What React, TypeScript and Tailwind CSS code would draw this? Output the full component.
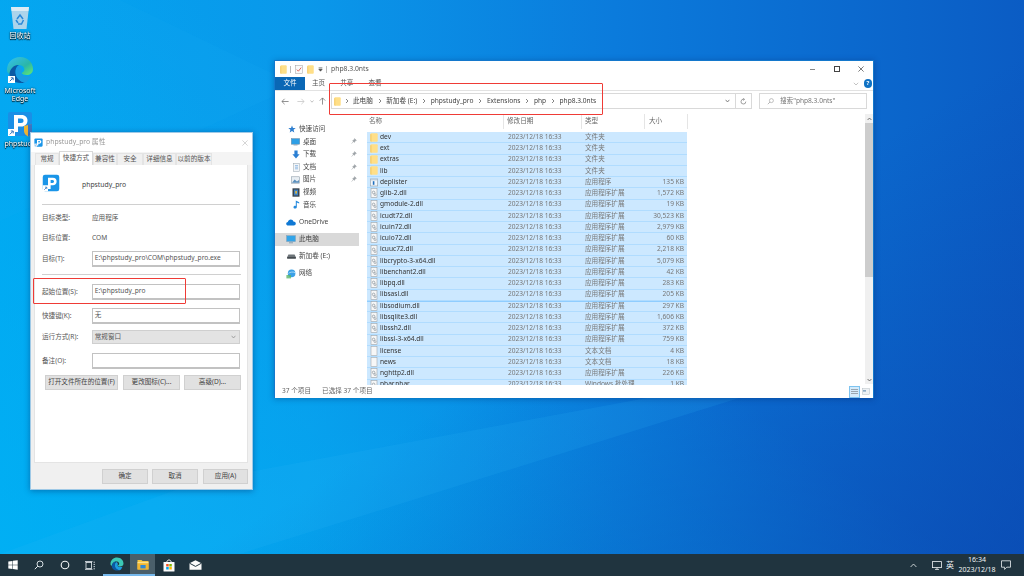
import React from "react";

const FONT = "[font-family:'Noto_Sans','Noto_Sans_CJK_SC',sans-serif]";

type Row = { n: string; t: string; s: string; k: "folder" | "dll" | "exe" | "txt" | "phar" };
const dll = "应用程序扩展";
const rows: Row[] = [
  { n: "dev", t: "文件夹", s: "", k: "folder" },
  { n: "ext", t: "文件夹", s: "", k: "folder" },
  { n: "extras", t: "文件夹", s: "", k: "folder" },
  { n: "lib", t: "文件夹", s: "", k: "folder" },
  { n: "deplister", t: "应用程序", s: "135 KB", k: "exe" },
  { n: "glib-2.dll", t: dll, s: "1,572 KB", k: "dll" },
  { n: "gmodule-2.dll", t: dll, s: "19 KB", k: "dll" },
  { n: "icudt72.dll", t: dll, s: "30,523 KB", k: "dll" },
  { n: "icuin72.dll", t: dll, s: "2,979 KB", k: "dll" },
  { n: "icuio72.dll", t: dll, s: "60 KB", k: "dll" },
  { n: "icuuc72.dll", t: dll, s: "2,218 KB", k: "dll" },
  { n: "libcrypto-3-x64.dll", t: dll, s: "5,079 KB", k: "dll" },
  { n: "libenchant2.dll", t: dll, s: "42 KB", k: "dll" },
  { n: "libpq.dll", t: dll, s: "283 KB", k: "dll" },
  { n: "libsasl.dll", t: dll, s: "205 KB", k: "dll" },
  { n: "libsodium.dll", t: dll, s: "297 KB", k: "dll" },
  { n: "libsqlite3.dll", t: dll, s: "1,606 KB", k: "dll" },
  { n: "libssh2.dll", t: dll, s: "372 KB", k: "dll" },
  { n: "libssl-3-x64.dll", t: dll, s: "759 KB", k: "dll" },
  { n: "license", t: "文本文档", s: "4 KB", k: "txt" },
  { n: "news", t: "文本文档", s: "18 KB", k: "txt" },
  { n: "nghttp2.dll", t: dll, s: "226 KB", k: "dll" },
  { n: "phar.phar", t: "Windows 批处理...", s: "1 KB", k: "phar" },
];

function Wallpaper() {
  return (
    <svg className="absolute inset-0 w-full h-full" viewBox="0 0 1024 576" preserveAspectRatio="none">
      <defs>
        <linearGradient id="wp" x1="0" y1="0.5" x2="1" y2="0.5">
          <stop offset="0" stopColor="#02a4f0" />
          <stop offset="0.3" stopColor="#0a98ea" />
          <stop offset="0.6" stopColor="#0b7bdc" />
          <stop offset="1" stopColor="#0b5cc4" />
        </linearGradient>
        <linearGradient id="wp2" x1="0" y1="1" x2="0.6" y2="0.55">
          <stop offset="0" stopColor="#00b4f5" stopOpacity="0.7" />
          <stop offset="1" stopColor="#00b4f5" stopOpacity="0" />
        </linearGradient>
        <linearGradient id="wp3" x1="1" y1="1" x2="0.55" y2="0.6">
          <stop offset="0" stopColor="#0a45ad" stopOpacity="0.6" />
          <stop offset="1" stopColor="#0a45ad" stopOpacity="0" />
        </linearGradient>
      </defs>
      <rect width="1024" height="576" fill="url(#wp)" />
      <rect width="1024" height="576" fill="url(#wp2)" />
      <rect width="1024" height="576" fill="url(#wp3)" />
      <polygon points="120,0 300,90 274,100 0,230 0,0" fill="#1eb4f7" opacity="0.1" />
      <polygon points="874,370 240,576 0,576 200,500" fill="#30b8f5" opacity="0.14" />
    </svg>
  );
}

function FolderIcon({ w = 8, h = 9 }: { w?: number; h?: number }) {
  return (
    <svg width={w} height={h} viewBox="0 0 8 9" className="shrink-0" preserveAspectRatio="none">
      <path d="M0.4 1.2 C0.4 0.6 0.8 0.3 1.3 0.3 H6.8 C7.3 0.3 7.7 0.6 7.7 1.2 V8 C7.7 8.5 7.3 8.8 6.8 8.8 H1.3 C0.8 8.8 0.4 8.5 0.4 8 Z" fill="#ffdf88" />
      <path d="M0.4 1.2 H1.4 V8.8 H1.3 C0.8 8.8 0.4 8.5 0.4 8 Z" fill="#f3c65d" />
    </svg>
  );
}

function FileIcon({ k }: { k: Row["k"] }) {
  if (k === "folder") return <FolderIcon />;
  if (k === "exe")
    return (
      <svg width="8" height="9" viewBox="0 0 8 9" className="shrink-0">
        <rect x="0.3" y="1" width="7.4" height="7" fill="#f4f7fa" stroke="#8c9aa6" strokeWidth="0.6" />
        <rect x="0.6" y="1.2" width="6.8" height="1.2" fill="#b8cbdc" />
        <rect x="2.8" y="3.2" width="1.6" height="3.6" fill="#1e6fbf" />
      </svg>
    );
  if (k === "txt")
    return (
      <svg width="8" height="10" viewBox="0 0 8 10" className="shrink-0">
        <rect x="1" y="0.5" width="6" height="9" fill="#f7f7f7" stroke="#a4a9ad" strokeWidth="0.6" />
      </svg>
    );
  return (
    <svg width="8" height="10" viewBox="0 0 8 10" className="shrink-0">
      <rect x="1" y="0.5" width="6" height="9" fill="#f7f7f7" stroke="#9ba2a8" strokeWidth="0.6" />
      <circle cx="3.6" cy="4.4" r="1.3" fill="none" stroke="#8a949c" strokeWidth="0.7" />
      <circle cx="5" cy="6.6" r="1" fill="none" stroke="#8a949c" strokeWidth="0.6" />
    </svg>
  );
}

function Chevron() {
  return (
    <svg width="4" height="6" viewBox="0 0 4 6" className="shrink-0">
      <path d="M1 1 L3 3 L1 5" fill="none" stroke="#666" strokeWidth="0.8" />
    </svg>
  );
}

function Pin() {
  return (
    <svg width="6" height="7" viewBox="0 0 6 7" className="shrink-0">
      <path d="M3.6 0.6 L5.4 2.4 L4.3 2.8 L3.3 4.4 L1.6 2.7 L3.2 1.7 Z M2.3 3.6 L0.6 5.6" fill="#9aa0a5" stroke="#9aa0a5" strokeWidth="0.5" />
    </svg>
  );
}

function PIcon({ size }: { size: number }) {
  return (
    <svg width={size} height={size} viewBox="0 0 24 24" className="shrink-0">
      <rect x="1" y="1" width="22" height="22" rx="3" fill="#1a95e8" />
      <path d="M8 5 H14.5 C18 5 19.5 7 19.5 10 C19.5 13 17.5 15 14.5 15 H11.5 V20 H8 Z M11.5 8 V12 H14 C15.5 12 16 11 16 10 C16 9 15.5 8 14 8 Z" fill="#fff" fillRule="evenodd" />
      <rect x="1" y="15" width="7" height="8" fill="#fff" />
      <path d="M3 21 L6 18 M4 17.6 H6.4 V20" stroke="#2a6fb8" strokeWidth="1" fill="none" />
    </svg>
  );
}

const navIcons: Record<string, React.ReactNode> = {
  star: (
    <svg width="8" height="8" viewBox="0 0 8 8"><path d="M4 0.4 L5 2.9 L7.7 3 L5.6 4.7 L6.3 7.4 L4 5.9 L1.7 7.4 L2.4 4.7 L0.3 3 L3 2.9 Z" fill="#2f7fd0" /></svg>
  ),
  desk: (
    <svg width="9" height="8" viewBox="0 0 9 8"><rect x="0.3" y="0.6" width="8.4" height="5.6" fill="#2d9fe6" stroke="#6c8aa3" strokeWidth="0.5" /><rect x="2.5" y="6.4" width="4" height="1" fill="#8aa0b3" /></svg>
  ),
  down: (
    <svg width="8" height="9" viewBox="0 0 8 9"><path d="M2.4 0.4 H5.6 V4.2 H7.6 L4 8.4 L0.4 4.2 H2.4 Z" fill="#2b7fd3" /></svg>
  ),
  doc: (
    <svg width="7" height="9" viewBox="0 0 7 9"><rect x="0.5" y="0.4" width="6" height="8.2" fill="#f2f5f8" stroke="#97a4ad" strokeWidth="0.5" /><path d="M2 2.6 H5 M2 4.2 H5 M2 5.8 H5" stroke="#5c9bd6" strokeWidth="0.6" /></svg>
  ),
  pic: (
    <svg width="9" height="8" viewBox="0 0 9 8"><rect x="0.4" y="0.8" width="8.2" height="6.4" fill="#e8eef3" stroke="#7e8f9c" strokeWidth="0.5" /><path d="M1 6.8 L3.6 3.6 L6 5.6 L8 4 V6.8 Z" fill="#5a8fbd" /></svg>
  ),
  vid: (
    <svg width="8" height="9" viewBox="0 0 8 9"><rect x="0.5" y="0.3" width="7" height="8.4" fill="#39434c" /><rect x="2" y="1.6" width="4" height="5.8" fill="#3e7fc0" /><rect x="3.2" y="3" width="1.8" height="2.6" fill="#d7b64a" /></svg>
  ),
  music: (
    <svg width="7" height="9" viewBox="0 0 7 9"><path d="M2.8 0.4 L6.2 2.2 V3.6 L3.8 2.5 V7 C3.8 8 3 8.6 2 8.6 C1 8.6 0.5 8 0.5 7.2 C0.5 6.4 1.2 5.8 2 5.8 C2.4 5.8 2.6 5.9 2.8 6 Z" fill="#2489dc" /></svg>
  ),
  cloud: (
    <svg width="10" height="7" viewBox="0 0 10 7"><path d="M2.2 6.6 C1 6.6 0.2 5.8 0.2 4.8 C0.2 3.8 1 3.2 1.8 3.1 C2.2 1.6 3.4 0.6 4.8 0.6 C6 0.6 7 1.3 7.4 2.5 C8.8 2.5 9.8 3.4 9.8 4.6 C9.8 5.8 8.9 6.6 7.8 6.6 Z" fill="#0f78d4" /></svg>
  ),
  pc: (
    <svg width="10" height="9" viewBox="0 0 10 9"><rect x="0.5" y="0.6" width="9" height="6" fill="#33a4e8" stroke="#8ba0b2" strokeWidth="0.5" /><rect x="3" y="7" width="4" height="1.4" fill="#9fb0bd" /></svg>
  ),
  drive: (
    <svg width="9" height="5" viewBox="0 0 9 5"><path d="M1.4 0.4 H7.6 L8.8 3 V4.6 H0.2 V3 Z" fill="#6d7479" /><rect x="0.2" y="3" width="8.6" height="1.6" fill="#454b50" /></svg>
  ),
  net: (
    <svg width="10" height="10" viewBox="0 0 10 10"><circle cx="5.6" cy="4.4" r="3.8" fill="#3ba1e6" /><path d="M2.4 4.4 C4 3 7 2.6 9 3.6" stroke="#bfe4fa" strokeWidth="0.8" fill="none" /><rect x="0.4" y="6" width="4.6" height="3.4" fill="#5ab56b" opacity="0.8" /></svg>
  ),
};

function NavItem({ icon, label, pin, sub, selected, cls = "" }: { icon: string; label: string; pin?: boolean; sub?: boolean; selected?: boolean; cls?: string }) {
  return (
    <div className={`flex items-center shrink-0 ${selected ? "bg-[#d9d9d9] h-[13px]" : "h-[12.6px]"} ${cls}`}>
      <div className={`flex justify-end pr-[3px] shrink-0 ${sub ? "w-[28px]" : "w-[24px]"}`}>{navIcons[icon]}</div>
      <span className="text-[6.6px] text-[#444] leading-none whitespace-nowrap flex-1">{label}</span>
      {pin && <div className="pr-[2px]"><Pin /></div>}
    </div>
  );
}

function Explorer() {
  return (
    <div className="absolute left-[274px] top-[60px] w-[600px] h-[338px] bg-white border-t border-x border-[#1478cc] flex flex-col shadow-[0_1px_6px_rgba(0,30,90,0.35)]">
      {/* title */}
      <div className="h-[16px] flex items-center shrink-0">
        <div className="ml-[5px]"><FolderIcon w={7} h={9} /></div>
        <div className="w-px h-[7px] bg-[#bbb] ml-[3px]" />
        <svg width="8" height="9" viewBox="0 0 8 9" className="ml-[4px]">
          <rect x="0.5" y="0.5" width="7" height="8" fill="#fafafa" stroke="#a0a0a0" strokeWidth="0.5" />
          <path d="M1.8 4.6 L3.4 6.2 L6.2 2.6" stroke="#d9534a" strokeWidth="0.9" fill="none" />
        </svg>
        <div className="ml-[4px]"><FolderIcon w={7} h={9} /></div>
        <svg width="5" height="5" viewBox="0 0 5 5" className="ml-[4px]"><path d="M0.6 0.8 H4.4 M0.8 2.2 H4.2 L2.5 4.2 Z" stroke="#444" strokeWidth="0.6" fill="#444" /></svg>
        <div className="w-px h-[7px] bg-[#bbb] ml-[3px]" />
        <span className="ml-[4px] text-[6.8px] text-[#555] leading-none">php8.3.0nts</span>
        <div className="ml-auto flex items-center">
          <div className="w-[5px] h-px bg-[#888] mr-[19px]" />
          <div className="w-[6px] h-[6px] border border-[#444] mr-[18px]" />
          <svg width="6" height="6" viewBox="0 0 6 6" className="mr-[9px]"><path d="M0.4 0.4 L5.6 5.6 M5.6 0.4 L0.4 5.6" stroke="#444" strokeWidth="0.7" /></svg>
        </div>
      </div>
      {/* ribbon tabs */}
      <div className="h-[14px] flex items-center shrink-0 border-b border-[#e2e2e2] relative">
        <div className="w-[30px] h-[13px] bg-[#0a67b5] flex items-center justify-center text-white text-[6.6px] leading-none">文件</div>
        <span className="ml-[7px] text-[6.6px] text-[#555] leading-none">主页</span>
        <span className="ml-[15px] text-[6.6px] text-[#555] leading-none">共享</span>
        <span className="ml-[15px] text-[6.6px] text-[#555] leading-none">查看</span>
        <div className="ml-auto flex items-center gap-[5px] mr-[1px]">
          <svg width="6" height="4" viewBox="0 0 6 4"><path d="M0.8 0.8 L3 3 L5.2 0.8" stroke="#aaa" strokeWidth="0.7" fill="none" /></svg>
          <div className="w-[8px] h-[9px] rounded-full bg-[#0f72c4] text-white text-[6px] font-bold leading-[9px] text-center">?</div>
        </div>
      </div>
      {/* address row */}
      <div className="h-[20px] flex items-center shrink-0">
        <div className="w-[56px] flex items-center shrink-0 pl-[6px]">
          <svg width="8" height="7" viewBox="0 0 8 7"><path d="M7.6 3.5 H1 M3.6 0.8 L0.9 3.5 L3.6 6.2" stroke="#777" strokeWidth="0.8" fill="none" /></svg>
          <svg width="8" height="7" viewBox="0 0 8 7" className="ml-[8px]"><path d="M0.4 3.5 H7 M4.4 0.8 L7.1 3.5 L4.4 6.2" stroke="#c8c8c8" strokeWidth="0.8" fill="none" /></svg>
          <svg width="4" height="3" viewBox="0 0 4 3" className="ml-[5px]"><path d="M0.5 0.5 L2 2.2 L3.5 0.5" stroke="#999" strokeWidth="0.6" fill="none" /></svg>
          <svg width="7" height="8" viewBox="0 0 7 8" className="ml-[5px]"><path d="M3.5 7.6 V1 M0.8 3.6 L3.5 0.9 L6.2 3.6" stroke="#777" strokeWidth="0.8" fill="none" /></svg>
        </div>
        <div className="w-[421px] h-[16px] border border-[#d9d9d9] flex items-center shrink-0">
          <div className="ml-[2px]"><FolderIcon w={7} h={9} /></div>
          <div className="ml-[4px]"><Chevron /></div>
          <span className="ml-[4px] text-[6.6px] text-[#444] leading-none">此电脑</span>
          <div className="ml-[5px]"><Chevron /></div>
          <span className="ml-[4.5px] text-[6.6px] text-[#444] leading-none">新加卷 (E:)</span>
          <div className="ml-[5px]"><Chevron /></div>
          <span className="ml-[4.5px] text-[6.6px] text-[#444] leading-none">phpstudy_pro</span>
          <div className="ml-[5px]"><Chevron /></div>
          <span className="ml-[4.5px] text-[6.6px] text-[#444] leading-none">Extensions</span>
          <div className="ml-[5px]"><Chevron /></div>
          <span className="ml-[4.5px] text-[6.6px] text-[#444] leading-none">php</span>
          <div className="ml-[5px]"><Chevron /></div>
          <span className="ml-[4.5px] text-[6.6px] text-[#444] leading-none">php8.3.0nts</span>
          <div className="ml-auto w-[16px] flex justify-center">
            <svg width="5" height="4" viewBox="0 0 5 4"><path d="M0.6 0.8 L2.5 3 L4.4 0.8" stroke="#666" strokeWidth="0.8" fill="none" /></svg>
          </div>
          <div className="w-[16px] h-full border-l border-[#d9d9d9] flex items-center justify-center">
            <svg width="7" height="7" viewBox="0 0 7 7"><path d="M5.8 3.6 A2.4 2.4 0 1 1 4 1.3 M3.2 0.2 L4.6 1.3 L3.4 2.6" stroke="#777" strokeWidth="0.7" fill="none" /></svg>
          </div>
        </div>
        <div className="ml-[7px] w-[108px] h-[16px] border border-[#d9d9d9] flex items-center shrink-0">
          <svg width="7" height="7" viewBox="0 0 7 7" className="ml-[7px]"><circle cx="4.4" cy="2.6" r="2" fill="none" stroke="#999" strokeWidth="0.6" /><path d="M3 4 L0.8 6.2" stroke="#999" strokeWidth="0.7" /></svg>
          <span className="ml-[6px] text-[6.6px] text-[#777] leading-none">搜索"php8.3.0nts"</span>
        </div>
      </div>
      {/* body */}
      <div className="flex-1 min-h-0 flex">
        <div className="w-[84px] pt-[12px] flex flex-col shrink-0">
          <NavItem icon="star" label="快速访问" />
          <NavItem icon="desk" label="桌面" pin sub />
          <NavItem icon="down" label="下载" pin sub />
          <NavItem icon="doc" label="文档" pin sub />
          <NavItem icon="pic" label="图片" pin sub />
          <NavItem icon="vid" label="视频" sub />
          <NavItem icon="music" label="音乐" sub />
          <NavItem icon="cloud" label="OneDrive" cls="mt-[5px]" />
          <NavItem icon="pc" label="此电脑" selected cls="mt-[4px]" />
          <NavItem icon="drive" label="新加卷 (E:)" cls="mt-[4px]" />
          <NavItem icon="net" label="网络" cls="mt-[5px]" />
        </div>
        <div className="w-[8px] shrink-0" />
        <div className="flex-1 min-w-0 flex flex-col">
          <div className="h-[15px] flex mt-[3px] shrink-0 text-[6.6px] text-[#666]">
            <div className="w-[137px] pl-[2px] border-r border-[#e5e5e5] leading-[13px]">名称</div>
            <div className="w-[78px] pl-[3px] border-r border-[#e5e5e5] leading-[13px]">修改日期</div>
            <div className="w-[63px] pl-[3px] border-r border-[#e5e5e5] leading-[13px]">类型</div>
            <div className="w-[43px] pl-[4px] border-r border-[#e5e5e5] leading-[13px]">大小</div>
          </div>
          <div className="mt-[3px] flex-1 min-h-0 overflow-hidden">
            {rows.map((r) => (
              <div key={r.n} className={`w-[320px] h-[11.25px] flex items-center bg-[#cce8ff] border-b border-[#b0dcff] ${r.n === "libsodium.dll" ? "border-t border-t-[#8fcdff]" : ""}`}>
                <div className="w-[13px] flex justify-center pl-[1px] shrink-0"><FileIcon k={r.k} /></div>
                <div className="w-[128px] text-[6.6px] text-[#333] leading-none whitespace-nowrap">{r.n}</div>
                <div className="w-[77px] text-[6.6px] text-[#777] leading-none whitespace-nowrap">2023/12/18 16:33</div>
                <div className="w-[62px] text-[6.6px] text-[#777] leading-none whitespace-nowrap">{r.t}</div>
                <div className="w-[37px] text-right text-[6.6px] text-[#777] leading-none whitespace-nowrap">{r.s}</div>
              </div>
            ))}
          </div>
        </div>
        <div className="w-[8px] mt-[3px] mb-[1px] bg-[#f0f0f0] flex flex-col shrink-0">
          <div className="h-[9px] flex items-center justify-center">
            <svg width="5" height="4" viewBox="0 0 5 4"><path d="M0.6 3 L2.5 1 L4.4 3" stroke="#555" strokeWidth="0.8" fill="none" /></svg>
          </div>
          <div className="h-[154px] bg-[#cdcdcd]" />
          <div className="mt-auto h-[9px] flex items-center justify-center">
            <svg width="5" height="4" viewBox="0 0 5 4"><path d="M0.6 1 L2.5 3 L4.4 1" stroke="#555" strokeWidth="0.8" fill="none" /></svg>
          </div>
        </div>
      </div>
      {/* status */}
      <div className="h-[13px] flex items-center shrink-0 text-[6.6px] text-[#666] leading-none">
        <span className="ml-[7px]">37 个项目</span>
        <span className="ml-[11px]">已选择 37 个项目</span>
        <div className="ml-auto flex items-center mr-[3px]">
          <div className="w-[11px] h-[12px] bg-[#d4ebfb] border border-[#7dc3f0] flex flex-col justify-center gap-px px-px">
            <div className="h-px bg-[#9aa6b0]" /><div className="h-px bg-[#9aa6b0]" /><div className="h-px bg-[#9aa6b0]" />
          </div>
          <svg width="8" height="7" viewBox="0 0 8 7" className="ml-[2px]"><rect x="0.3" y="0.5" width="7.4" height="6" fill="#edf1f4" stroke="#a8b2ba" strokeWidth="0.4" /><rect x="1" y="2.4" width="3" height="1" fill="#4e7da6" /></svg>
        </div>
      </div>
    </div>
  );
}

function Field({ label, value, cls = "" }: { label: string; value: string; cls?: string }) {
  return (
    <div className={`flex items-center shrink-0 ${cls}`}>
      <div className="w-[50px] text-[6.6px] text-[#555] leading-none whitespace-nowrap">{label}</div>
      <div className="w-[149px] h-[16px] bg-white border border-[#c2c2c2] border-b-2 px-[2px] pt-[2px] text-[6.6px] text-[#555] leading-[8px] whitespace-nowrap">{value}</div>
    </div>
  );
}

function Info({ label, value, cls = "" }: { label: string; value: string; cls?: string }) {
  return (
    <div className={`flex items-center h-[10px] shrink-0 ${cls}`}>
      <div className="w-[50px] text-[6.6px] text-[#555] leading-none">{label}</div>
      <div className="text-[6.6px] text-[#555] leading-none">{value}</div>
    </div>
  );
}

function Btn({ w, children, cls = "" }: { w: string; children: React.ReactNode; cls?: string }) {
  return <div className={`${w} h-[15px] bg-[#e1e1e1] border border-[#d0d0d0] flex items-center justify-center text-[6.6px] text-[#444] leading-none whitespace-nowrap shrink-0 ${cls}`}>{children}</div>;
}

const tabs = ["常规", "快捷方式", "兼容性", "安全", "详细信息", "以前的版本"];
const tabW = ["w-[24px]", "w-[34px]", "w-[24px]", "w-[26px]", "w-[33px]", "w-[36px]"];

function Dialog() {
  return (
    <div className="absolute left-[30px] top-[132px] w-[223px] h-[358px] bg-[#f0f0f0] flex flex-col shadow-[0_1px_6px_rgba(0,30,90,0.4)] border border-[#9fc9e6]">
      <div className="h-[19px] bg-white flex items-center shrink-0">
        <div className="ml-[3px]"><PIcon size={9} /></div>
        <span className="ml-[3px] text-[6.8px] text-[#999] leading-none">phpstudy_pro 属性</span>
        <svg width="6" height="6" viewBox="0 0 6 6" className="ml-auto mr-[4px]"><path d="M0.4 0.4 L5.6 5.6 M5.6 0.4 L0.4 5.6" stroke="#bbb" strokeWidth="0.6" /></svg>
      </div>
      <div className="h-[13px] flex items-end pl-[4px] shrink-0 bg-[#f4f4f4]">
        {tabs.map((t, i) => (
          <div key={t} className={`${tabW[i]} flex items-center justify-center text-[6.6px] text-[#555] leading-none whitespace-nowrap border-t border-x ${i === 1 ? "h-[14px] bg-white border-[#d9d9d9]" : "h-[12px] bg-[#f0f0f0] border-[#e4e4e4]"}`}>{t}</div>
        ))}
      </div>
      <div className="flex-1 flex flex-col bg-[#f0f0f0] pl-[3px] pr-[4px]">
        <div className="h-[298px] bg-white px-[7px] flex flex-col shrink-0 border border-[#e4e4e4] border-t-0">
          <div className="flex items-center mt-[9px] shrink-0">
            <PIcon size={18} />
            <span className="ml-[22px] text-[6.8px] text-[#444] leading-none mt-[4px]">phpstudy_pro</span>
          </div>
          <div className="h-px bg-[#d0d0d0] mt-[12px] shrink-0" />
          <Info label="目标类型:" value="应用程序" cls="mt-[8px]" />
          <Info label="目标位置:" value="COM" cls="mt-[10px]" />
          <Field label="目标(T):" value="E:\phpstudy_pro\COM\phpstudy_pro.exe" cls="mt-[8px]" />
          <div className="h-px bg-[#d0d0d0] mt-[7px] shrink-0 w-[199px]" />
          <Field label="起始位置(S):" value="E:\phpstudy_pro" cls="mt-[9px]" />
          <Field label="快捷键(K):" value="无" cls="mt-[8px]" />
          <div className="flex items-center shrink-0 mt-[6px]">
            <div className="w-[50px] text-[6.6px] text-[#555] leading-none">运行方式(R):</div>
            <div className="w-[149px] h-[14px] bg-[#e3e3e3] border border-[#cfcfcf] flex items-center px-[2px] text-[6.6px] text-[#555] leading-none">
              常规窗口
              <svg width="5" height="4" viewBox="0 0 5 4" className="ml-auto mr-px"><path d="M0.6 0.8 L2.5 3 L4.4 0.8" stroke="#888" strokeWidth="0.7" fill="none" /></svg>
            </div>
          </div>
          <Field label="备注(O):" value="" cls="mt-[9px]" />
          <div className="flex mt-[6px] pl-[3px] shrink-0">
            <Btn w="w-[73px]">打开文件所在的位置(F)</Btn>
            <Btn w="w-[57px]" cls="ml-[5px]">更改图标(C)...</Btn>
            <Btn w="w-[57px]" cls="ml-[4px]">高级(D)...</Btn>
          </div>
        </div>
        <div className="flex justify-end mt-[6px] shrink-0">
          <Btn w="w-[46px]">确定</Btn>
          <Btn w="w-[46px]" cls="ml-[4px]">取消</Btn>
          <Btn w="w-[45px]" cls="ml-[5px]">应用(A)</Btn>
        </div>
      </div>
    </div>
  );
}

function DesktopIcons() {
  const label = "text-[7px] text-white leading-[8px] text-center [text-shadow:0_0_2px_#000,0_1px_1px_#000]";
  return (
    <>
      <div className="absolute left-[0px] top-[4px] w-[40px] flex flex-col items-center">
        <svg width="22" height="26" viewBox="0 0 22 26">
          <path d="M2 3 L20 3 L17.5 25 H4.5 Z" fill="#bcd8ea" opacity="0.92" />
          <path d="M2 3 L20 3 L19.4 7 H2.6 Z" fill="#dcebf4" />
          <path d="M8 15 L11 11 L14 15 M14.5 16 L12.5 20 H9 M7 16 L9 19" stroke="#2b88d8" strokeWidth="1.5" fill="none" />
        </svg>
        <div className={`${label} mt-[2px]`}>回收站</div>
      </div>
      <div className="absolute left-[0px] top-[56px] w-[40px] flex flex-col items-center">
        <svg width="28" height="28" viewBox="0 0 28 28">
          <defs>
            <linearGradient id="edge1" x1="0" y1="0" x2="1" y2="1">
              <stop offset="0" stopColor="#35c1f1" />
              <stop offset="0.6" stopColor="#2ab6a8" />
              <stop offset="1" stopColor="#66eb6e" />
            </linearGradient>
          </defs>
          <path d="M1 14 C1 6 7 1 14 1 C22 1 27 7 27 13 C27 17 24 19 20.5 19 C18 19 16 18 15.5 17 C18 16 19 14 18 12 C16.5 9 13 8.5 10 9.5 C6 11 4 14 3.5 18 C2 17 1 16 1 14 Z" fill="url(#edge1)" />
          <path d="M3.5 18 C4 13 8 8.5 13 9 C9.5 11 9 15 10 19 C11 23 15 26 19 26.5 C17.5 27 16 27 14.5 27 C8 27 3.5 23 3.5 18 Z" fill="#0c59a4" />
          <path d="M10 19 C9 15 10 11.5 13 10 C15 11 16 13 15.5 15 C14.5 18 16 20 20.5 20.2 C23 20.3 24 20 25 19.5 C23.5 23.5 21 26 19 26.5 C15 26 11 23 10 19 Z" fill="#1b9de2" />
          <rect x="2" y="20" width="7" height="7" fill="#fff" />
          <path d="M3.8 25.2 L6.8 22.2 M4.8 21.8 H7.2 V24.2" stroke="#2a6fb8" strokeWidth="1" fill="none" />
        </svg>
        <div className={`${label} mt-[3px]`}>Microsoft<br />Edge</div>
      </div>
      <div className="absolute left-[0px] top-[111px] w-[40px] flex flex-col items-center">
        <svg width="26" height="26" viewBox="0 0 26 26">
          <rect x="1" y="1" width="24" height="24" rx="2" fill="#1a8fe6" />
          <path d="M7 4 H14.5 C18.5 4 20.5 6.5 20.5 9.5 C20.5 13 18 15.5 14.5 15.5 H11 V21 H7 Z M11 7.5 V12 H14 C15.8 12 16.5 11 16.5 9.7 C16.5 8.4 15.8 7.5 14 7.5 Z" fill="#fff" fillRule="evenodd" />
          <rect x="1" y="18" width="7" height="7" fill="#fff" />
          <path d="M2.8 23.4 L5.8 20.4 M3.8 20 H6.2 V22.4" stroke="#2a6fb8" strokeWidth="1" fill="none" />
          <path d="M17 15 L25 13 V20 C25 23 22 25 21 25.5 C20 25 17 23 17 20 Z" fill="#f2b632" />
          <path d="M21 13.6 L25 13 V20 C25 23 22 25 21 25.5 Z" fill="#3a76c4" />
        </svg>
        <div className={`${label} mt-[3px]`}>phpstudy</div>
      </div>
    </>
  );
}

function Taskbar() {
  return (
    <div className="h-[22px] bg-[#20343f] flex items-stretch shrink-0 relative z-10">
      <div className="w-[26px] flex items-center justify-center">
        <svg width="10" height="10" viewBox="0 0 10 10"><path d="M0.3 1.5 L4.5 0.9 V4.7 H0.3 Z M5 0.8 L9.7 0.2 V4.7 H5 Z M0.3 5.2 H4.5 V9 L0.3 8.5 Z M5 5.2 H9.7 V9.8 L5 9.1 Z" fill="#fff" /></svg>
      </div>
      <div className="w-[26px] flex items-center justify-center">
        <svg width="10" height="10" viewBox="0 0 10 10"><circle cx="6" cy="4" r="3" fill="none" stroke="#e8eef2" strokeWidth="0.9" /><path d="M3.8 6.2 L0.8 9.2" stroke="#e8eef2" strokeWidth="1" /></svg>
      </div>
      <div className="w-[25px] flex items-center justify-center">
        <svg width="10" height="10" viewBox="0 0 10 10"><circle cx="5" cy="5" r="3.8" fill="none" stroke="#f2f5f7" strokeWidth="1.1" /></svg>
      </div>
      <div className="w-[26px] flex items-center justify-center">
        <svg width="10" height="9" viewBox="0 0 10 9"><rect x="1" y="1.4" width="5.6" height="6" fill="none" stroke="#e8eef2" strokeWidth="0.8" /><path d="M0 0.5 H7.5 M0 8.4 H7.5 M8.5 1.2 H10 M8.5 3.4 H10 M8.5 5.6 H10 M8.5 7.8 H10" stroke="#e8eef2" strokeWidth="0.8" /></svg>
      </div>
      <div className="w-[27px] flex items-center justify-center border-b-2 border-[#76b9ed]">
        <svg width="14" height="14" viewBox="0 0 28 28">
          <path d="M1 14 C1 6 7 1 14 1 C22 1 27 7 27 13 C27 17 24 19 20.5 19 C18 19 16 18 15.5 17 C18 16 19 14 18 12 C16.5 9 13 8.5 10 9.5 C6 11 4 14 3.5 18 C2 17 1 16 1 14 Z" fill="#3cc9b6" />
          <path d="M3.5 18 C4 13 8 8.5 13 9 C9.5 11 9 15 10 19 C11 23 15 26 19 26.5 C17.5 27 16 27 14.5 27 C8 27 3.5 23 3.5 18 Z" fill="#0c59a4" />
          <path d="M10 19 C9 15 10 11.5 13 10 C15 11 16 13 15.5 15 C14.5 18 16 20 20.5 20.2 C23 20.3 24 20 25 19.5 C23.5 23.5 21 26 19 26.5 C15 26 11 23 10 19 Z" fill="#1b9de2" />
        </svg>
      </div>
      <div className="w-[25px] flex items-center justify-center bg-[#4a5f6a] border-b-2 border-[#76b9ed]">
        <svg width="12" height="11" viewBox="0 0 12 11"><path d="M0.5 1 H4.5 L5.5 2 H11.5 V10.5 H0.5 Z" fill="#f7c744" /><rect x="0.5" y="3" width="11" height="1.4" fill="#fbe38e" /><rect x="0.5" y="4.4" width="11" height="6.1" fill="#f2b632" /><rect x="3.4" y="6" width="5.2" height="3.4" fill="#2f89d6" /></svg>
      </div>
      <div className="w-[27px] flex items-center justify-center">
        <svg width="12" height="13" viewBox="0 0 12 13"><rect x="0.5" y="3" width="11" height="9.6" rx="0.6" fill="#fbfbfb" /><path d="M3.8 3.4 C3.8 0.2 8.2 0.2 8.2 3.4" fill="none" stroke="#fbfbfb" strokeWidth="1" /><rect x="3.2" y="5" width="2.5" height="2.5" fill="#f25022" /><rect x="6.3" y="5" width="2.5" height="2.5" fill="#7fba00" /><rect x="3.2" y="8" width="2.5" height="2.5" fill="#00a4ef" /><rect x="6.3" y="8" width="2.5" height="2.5" fill="#ffb900" /></svg>
      </div>
      <div className="w-[26px] flex items-center justify-center">
        <svg width="13" height="10" viewBox="0 0 13 10"><path d="M0.5 3.2 L6.5 0.2 L12.5 3.2 V9.8 H0.5 Z" fill="#fbfbfb" /><path d="M0.5 3.2 L6.5 6.4 L12.5 3.2" fill="none" stroke="#20343f" strokeWidth="1" /></svg>
      </div>
      <div className="ml-auto flex items-center text-[#f0f3f5]">
        <svg width="7" height="5" viewBox="0 0 7 5" className="mr-[15px]"><path d="M0.6 4 L3.5 1 L6.4 4" fill="none" stroke="#eef2f4" strokeWidth="0.8" /></svg>
        <svg width="10" height="9" viewBox="0 0 10 9" className="mr-[4px]"><rect x="0.5" y="0.6" width="9" height="6" fill="none" stroke="#eef2f4" strokeWidth="0.8" /><path d="M3 8.4 H7 M5 6.6 V8.4" stroke="#eef2f4" strokeWidth="0.8" /></svg>
        <span className="text-[8px] leading-none mr-[4px]">英</span>
        <div className="flex flex-col items-center w-[38px] text-[7px] leading-[10px]">
          <span>16:34</span>
          <span>2023/12/18</span>
        </div>
        <svg width="10" height="10" viewBox="0 0 10 10" className="ml-[5px] mr-[13px]"><path d="M0.5 0.8 H9.5 V7.2 H5.8 L3.6 9.4 V7.2 H0.5 Z" fill="none" stroke="#eef2f4" strokeWidth="0.8" /></svg>
      </div>
    </div>
  );
}

export default function App() {
  return (
    <div className={`w-[1024px] h-[576px] flex flex-col overflow-hidden relative ${FONT}`}>
      <div className="flex-1 relative overflow-hidden">
        <Wallpaper />
        <div className="absolute inset-0 blur-[0.35px]">
          <DesktopIcons />
          <Explorer />
          <Dialog />
        </div>
        {/* red annotations */}
        <div className="absolute left-[329px] top-[83px] w-[274px] h-[32px] border-[1.5px] border-[#ef3b36] rounded-[1px]" />
        <div className="absolute left-[33px] top-[278px] w-[153px] h-[26px] border-[1.5px] border-[#ef3b36] rounded-[1px]" />
      </div>
      <Taskbar />
    </div>
  );
}
